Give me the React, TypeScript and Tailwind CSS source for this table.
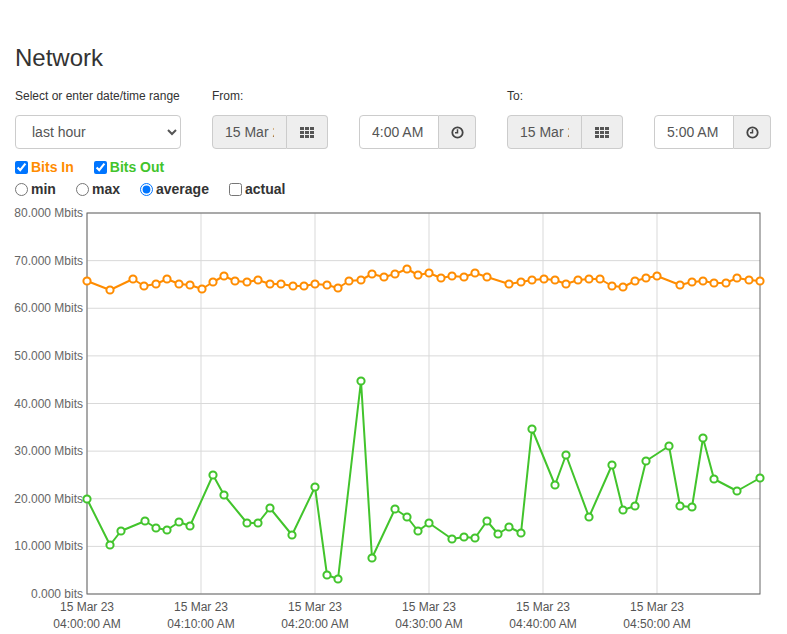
import React from 'react';

type Pt = [number, number];

const bitsIn: Pt[] = [
  [87, 281], [110, 290], [133, 279], [144, 286], [156, 284], [167, 279], [179, 284], [190, 285],
  [202, 289], [213, 282], [224, 276], [235, 281], [247, 282], [258, 280], [270, 284], [281, 284],
  [293, 286], [304, 286], [315, 284], [327, 285], [338, 288], [349, 281], [361, 280], [372, 274],
  [384, 277], [395, 274], [407, 269], [418, 275], [429, 273], [441, 278], [452, 276], [464, 277],
  [475, 273], [487, 277], [509, 284], [521, 282], [532, 280], [544, 279], [555, 280], [566, 284],
  [578, 280], [589, 279], [600, 279], [612, 286], [623, 287], [635, 281], [646, 278], [657, 276],
  [680, 285], [692, 282], [703, 281], [714, 283], [726, 283], [737, 278], [749, 280], [760, 281],
];

const bitsOut: Pt[] = [
  [87, 499], [110, 545], [121, 531], [145, 521], [156, 528], [167, 530], [179, 522], [190, 526],
  [213, 475], [224, 495], [247, 523], [258, 523], [270, 508], [292, 535], [315, 487], [327, 575],
  [338, 579], [361, 381], [372, 558], [395, 509], [407, 517], [418, 531], [429, 523], [452, 539],
  [464, 537], [475, 538], [487, 521], [498, 534], [509, 527], [521, 533], [532, 429], [555, 485],
  [566, 455], [589, 517], [612, 465], [623, 510], [635, 506], [646, 461], [669, 446], [680, 506],
  [692, 507], [703, 438], [714, 479], [737, 491], [760, 478],
];

const top = 213;
const bottom = 594;
const left = 87;
const right = 760;
const yTicks = ['80.000 Mbits', '70.000 Mbits', '60.000 Mbits', '50.000 Mbits', '40.000 Mbits', '30.000 Mbits', '20.000 Mbits', '10.000 Mbits', '0.000 bits'];
const xTicks = ['04:00:00 AM', '04:10:00 AM', '04:20:00 AM', '04:30:00 AM', '04:40:00 AM', '04:50:00 AM'];

function CalendarIcon() {
  return (
    <svg width="14" height="11" viewBox="0 0 14 11" fill="#555">
      {[0, 5, 10].map(x =>
        [0, 4, 8].map(y => <rect key={`${x}-${y}`} x={x} y={y} width="4" height="3" />)
      )}
    </svg>
  );
}

function ClockIcon() {
  return (
    <svg width="13" height="13" viewBox="0 0 13 13" fill="none" stroke="#444" strokeWidth="1.8">
      <circle cx="6.5" cy="6.5" r="5.2" />
      <path d="M6.5 3.3V6.8H4" strokeWidth="1.5" />
    </svg>
  );
}

function DateGroup() {
  return (
    <div className="flex h-[34px] w-[116px]">
      <input
        readOnly
        value="15 Mar 2023"
        className="w-[75px] rounded-l-[4px] border border-[#ccc] bg-[#eee] px-[12px] text-[14px] text-[#555] outline-none"
      />
      <span className="flex w-[41px] items-center justify-center rounded-r-[4px] border border-l-0 border-[#ccc] bg-[#eee]">
        <CalendarIcon />
      </span>
    </div>
  );
}

function TimeGroup({ value }: { value: string }) {
  return (
    <div className="flex h-[34px] w-[117px]">
      <input
        readOnly
        value={value}
        className="w-[80px] rounded-l-[4px] border border-[#ccc] bg-white px-[12px] text-[14px] text-[#555] outline-none"
      />
      <span className="flex w-[37px] items-center justify-center rounded-r-[4px] border border-l-0 border-[#ccc] bg-[#eee]">
        <ClockIcon />
      </span>
    </div>
  );
}

function Series({ points, color }: { points: Pt[]; color: string }) {
  return (
    <g>
      <polyline points={points.map(p => p.join(',')).join(' ')} fill="none" stroke={color} strokeWidth="2" strokeLinejoin="round" />
      {points.map(([x, y], i) => (
        <circle key={i} cx={x} cy={y} r="3.6" fill="#fff" stroke={color} strokeWidth="2" />
      ))}
    </g>
  );
}

function Chart() {
  const step = (bottom - top) / 8;
  return (
    <svg width="787" height="429" viewBox="0 205 787 429" className="mt-[6px] block" style={{ fontFamily: '"Liberation Sans", Arial, sans-serif' }}>
      {yTicks.map((_, i) => (
        <line key={i} x1={left} x2={right} y1={top + i * step} y2={top + i * step} stroke="#d9d9d9" strokeWidth="1" />
      ))}
      {xTicks.map((_, i) => (
        <line key={i} x1={left + i * 114} x2={left + i * 114} y1={top} y2={bottom} stroke="#d9d9d9" strokeWidth="1" />
      ))}
      <rect x={left} y={top} width={right - left} height={bottom - top} fill="none" stroke="#666" strokeWidth="1" />
      {yTicks.map((t, i) => (
        <text key={t} x="83" y={top + i * step + 4} textAnchor="end" fontSize="12" fill="#666">{t}</text>
      ))}
      {xTicks.map((t, i) => (
        <g key={t}>
          <text x={left + i * 114} y="611" textAnchor="middle" fontSize="12" fill="#555">15 Mar 23</text>
          <text x={left + i * 114} y="628" textAnchor="middle" fontSize="12" fill="#555">{t}</text>
        </g>
      ))}
      <Series points={bitsIn} color="#ff8c00" />
      <Series points={bitsOut} color="#42c42c" />
    </svg>
  );
}

export default function App() {
  return (
    <div className="h-[634px] w-[787px] overflow-hidden bg-white text-[#333]" style={{ fontFamily: '"Liberation Sans", Arial, sans-serif' }}>
      <div className="px-[15px] pt-[45px]">
        <h2 className="text-[24px] leading-[26px]">Network</h2>

        <div className="mt-[17px] flex gap-[31px] text-[12px] leading-[17px]">
          <div className="w-[166px]">
            <label className="block">Select or enter date/time range</label>
            <select className="mt-[10px] h-[34px] w-[166px] rounded-[4px] border border-[#ccc] bg-white pl-[12px] pr-[6px] text-[14px] text-[#555] outline-none" defaultValue="last hour">
              <option>last hour</option>
              <option>last day</option>
              <option>last week</option>
            </select>
          </div>
          <div className="w-[116px]">
            <label className="block">From:</label>
            <div className="mt-[10px]"><DateGroup /></div>
          </div>
          <div className="w-[117px] pt-[27px]">
            <TimeGroup value="4:00 AM" />
          </div>
          <div className="w-[116px]">
            <label className="block">To:</label>
            <div className="mt-[10px]"><DateGroup /></div>
          </div>
          <div className="w-[117px] pt-[27px]">
            <TimeGroup value="5:00 AM" />
          </div>
        </div>

        <div className="mt-[8px] flex items-center gap-[20px] text-[14px] font-bold leading-[20px]">
          <label className="flex items-center gap-[3px] text-[#ff8c00]">
            <input type="checkbox" defaultChecked className="m-0 h-[13px] w-[13px]" />
            Bits In
          </label>
          <label className="flex items-center gap-[3px] text-[#42c42c]">
            <input type="checkbox" defaultChecked className="m-0 h-[13px] w-[13px]" />
            Bits Out
          </label>
        </div>

        <div className="mt-[2px] flex items-center text-[14px] font-bold leading-[20px]">
          <label className="flex w-[61px] items-center gap-[3px]">
            <input type="radio" name="agg" className="m-0 h-[13px] w-[13px]" />
            min
          </label>
          <label className="flex w-[64px] items-center gap-[3px]">
            <input type="radio" name="agg" className="m-0 h-[13px] w-[13px]" />
            max
          </label>
          <label className="flex w-[89px] items-center gap-[3px]">
            <input type="radio" name="agg" defaultChecked className="m-0 h-[13px] w-[13px]" />
            average
          </label>
          <label className="flex items-center gap-[3px]">
            <input type="checkbox" className="m-0 h-[13px] w-[13px]" />
            actual
          </label>
        </div>
      </div>

      <Chart />
    </div>
  );
}
